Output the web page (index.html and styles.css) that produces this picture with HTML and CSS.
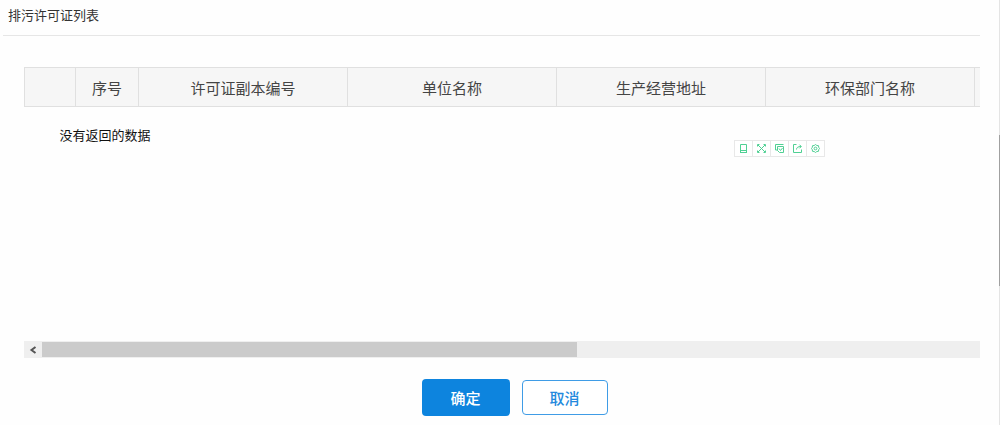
FILE: index.html
```html
<!DOCTYPE html>
<html lang="zh-CN">
<head>
    <meta charset="UTF-8">
    <meta name="viewport" content="width=device-width, initial-scale=1.0">
    <title>排污许可证列表</title>
    <link rel="stylesheet" href="styles.css">
</head>
<body>
    <div class="page">
        <main class="dialog">
            <!-- Title -->
            <header class="dialog-header">
                <h1>排污许可证列表</h1>
            </header>

            <!-- Permit list -->
            <section class="grid">
                <div class="grid-view">
                    <table class="permit-table">
                        <colgroup>
                            <col class="col-check">
                            <col class="col-index">
                            <col class="col-text">
                            <col class="col-text">
                            <col class="col-text">
                            <col class="col-text">
                            <col class="col-text">
                        </colgroup>
                        <thead>
                            <tr>
                                <th></th>
                                <th>序号</th>
                                <th>许可证副本编号</th>
                                <th>单位名称</th>
                                <th>生产经营地址</th>
                                <th>环保部门名称</th>
                                <th></th>
                            </tr>
                        </thead>
                        <tbody>
                            <tr>
                                <td colspan="7" class="empty">没有返回的数据</td>
                            </tr>
                        </tbody>
                    </table>

                    <!-- Floating tools -->
                    <div class="toolbar">
                        <button type="button" aria-label="设备">
                            <svg viewBox="0 0 9 9"><path d="M1.5 .5h6v8h-6zM1 8.5h7M1.5 6.5h6"/></svg>
                        </button>
                        <button type="button" aria-label="全屏">
                            <svg viewBox="0 0 9 9"><path d="M.5 2.5v-2h2M6.5 .5h2v2M.5 6.5v2h2M6.5 8.5h2v-2M1 1l7 7M8 1L1 8"/></svg>
                        </button>
                        <button type="button" aria-label="截图">
                            <svg viewBox="0 0 9 9"><path d="M.5 6V.5h8M2.5 2.5h6v6h-4l-2-2zM4 4.5l1.500 2 2-2.500M.5 6h2"/></svg>
                        </button>
                        <button type="button" aria-label="分享">
                            <svg viewBox="0 0 9 9"><path d="M3.5 .5h-3v8h8v-3M3.5 5.5c0-2 1.500-3 4.500-3M6.500 .7l1.800 1.800-1.800 1.800"/></svg>
                        </button>
                        <button type="button" aria-label="设置">
                            <svg viewBox="0 0 9 9"><path d="M4.5 .5l1.300 1 1.700.2.200 1.600.8 1.200-.8 1.200-.2 1.600-1.700.2-1.300 1-1.300-1-1.700-.2-.2-1.600L.5 4.500l.8-1.200.2-1.600 1.700-.2z"/><circle cx="4.5" cy="4.5" r="1.4"/></svg>
                        </button>
                    </div>
                </div>

                <!-- Horizontal scrollbar -->
                <div class="scrollbar">
                    <button type="button" class="scroll-left" aria-label="向左滚动">
                        <svg viewBox="0 0 8 8"><path d="M6.5 1L2.5 4l4 3"/></svg>
                    </button>
                    <div class="scroll-track">
                        <div class="scroll-thumb"></div>
                    </div>
                </div>
            </section>

            <!-- Actions -->
            <footer class="actions">
                <button type="button" class="btn btn-primary">确定</button>
                <button type="button" class="btn btn-default">取消</button>
            </footer>
        </main>

        <div class="page-rail">
            <div class="page-rail-thumb"></div>
        </div>
    </div>
</body>
</html>
```
FILE: styles.css
```css
/* Basic reset */
* {
    margin: 0;
    padding: 0;
    box-sizing: border-box;
}

body {
    background-color: #fefefe;
    color: #333;
    font-family: "Noto Sans CJK SC", sans-serif;
    font-size: 13px;
}

button {
    font-family: inherit;
    cursor: pointer;
}

.page {
    display: flex;
    min-height: 100vh;
}

.dialog {
    flex: 1;
    min-width: 0;
    padding: 0 19px 0 3px;
}

/* Title */
.dialog-header {
    padding: 5px 5px 10px;
    border-bottom: 1px solid #e6e6e6;
}

.dialog-header h1 {
    font-size: 13px;
    font-weight: 400;
    line-height: 20px;
}

/* List */
.grid {
    margin: 31px 0 0 21px;
}

.grid-view {
    position: relative;
    height: 274px;
    overflow: hidden;
}

.permit-table {
    width: 1160px;
    table-layout: fixed;
    border-collapse: collapse;
}

.col-check {
    width: 51px;
}

.col-index {
    width: 63px;
}

.col-text {
    width: 209px;
}

.permit-table th {
    height: 39px;
    padding-top: 2px;
    background-color: #f6f6f6;
    border: 1px solid #e0e0e0;
    color: #444;
    font-size: 15px;
    font-weight: 400;
    line-height: 20px;
}

.permit-table .empty {
    padding: 18px 35px;
    color: #111;
    line-height: 20px;
}

/* Floating tools */
.toolbar {
    position: absolute;
    top: 73px;
    right: 155px;
    display: flex;
    border: 1px solid #e8e8e8;
    border-right: 0;
    background-color: #fff;
}

.toolbar button {
    display: flex;
    align-items: center;
    justify-content: center;
    width: 18px;
    height: 15px;
    border: 0;
    border-right: 1px solid #e8e8e8;
    background: none;
}

.toolbar svg {
    width: 9px;
    height: 9px;
    fill: none;
    stroke: #4fd093;
}

/* Horizontal scrollbar */
.scrollbar {
    display: flex;
    height: 17px;
    background-color: #efefef;
}

.scroll-left {
    display: flex;
    align-items: center;
    justify-content: center;
    width: 18px;
    border: 0;
    background: none;
}

.scroll-left svg {
    width: 8px;
    height: 8px;
    fill: none;
    stroke: #555;
    stroke-width: 2;
}

.scroll-track {
    flex: 1;
    padding: 1px 0;
}

.scroll-thumb {
    width: 57%;
    height: 100%;
    background-color: #cbcbcb;
}

/* Actions */
.actions {
    display: flex;
    align-items: center;
    justify-content: center;
    gap: 12px;
    padding: 21px 0 9px 46px;
}

.btn {
    border-radius: 4px;
    font-size: 15px;
    font-weight: 500;
    line-height: 20px;
}

.btn-primary {
    width: 88px;
    height: 37px;
    border: 0;
    background-color: #0d84de;
    color: #fff;
}

.btn-default {
    width: 86px;
    height: 35px;
    border: 1px solid #3f9ce6;
    background-color: #fff;
    color: #2389dd;
}

/* Page scrollbar at the window edge */
.page-rail {
    width: 1px;
    padding-top: 135px;
    background-color: #e4e4e4;
}

.page-rail-thumb {
    height: 151px;
    background-color: #a0a0a0;
}
```
